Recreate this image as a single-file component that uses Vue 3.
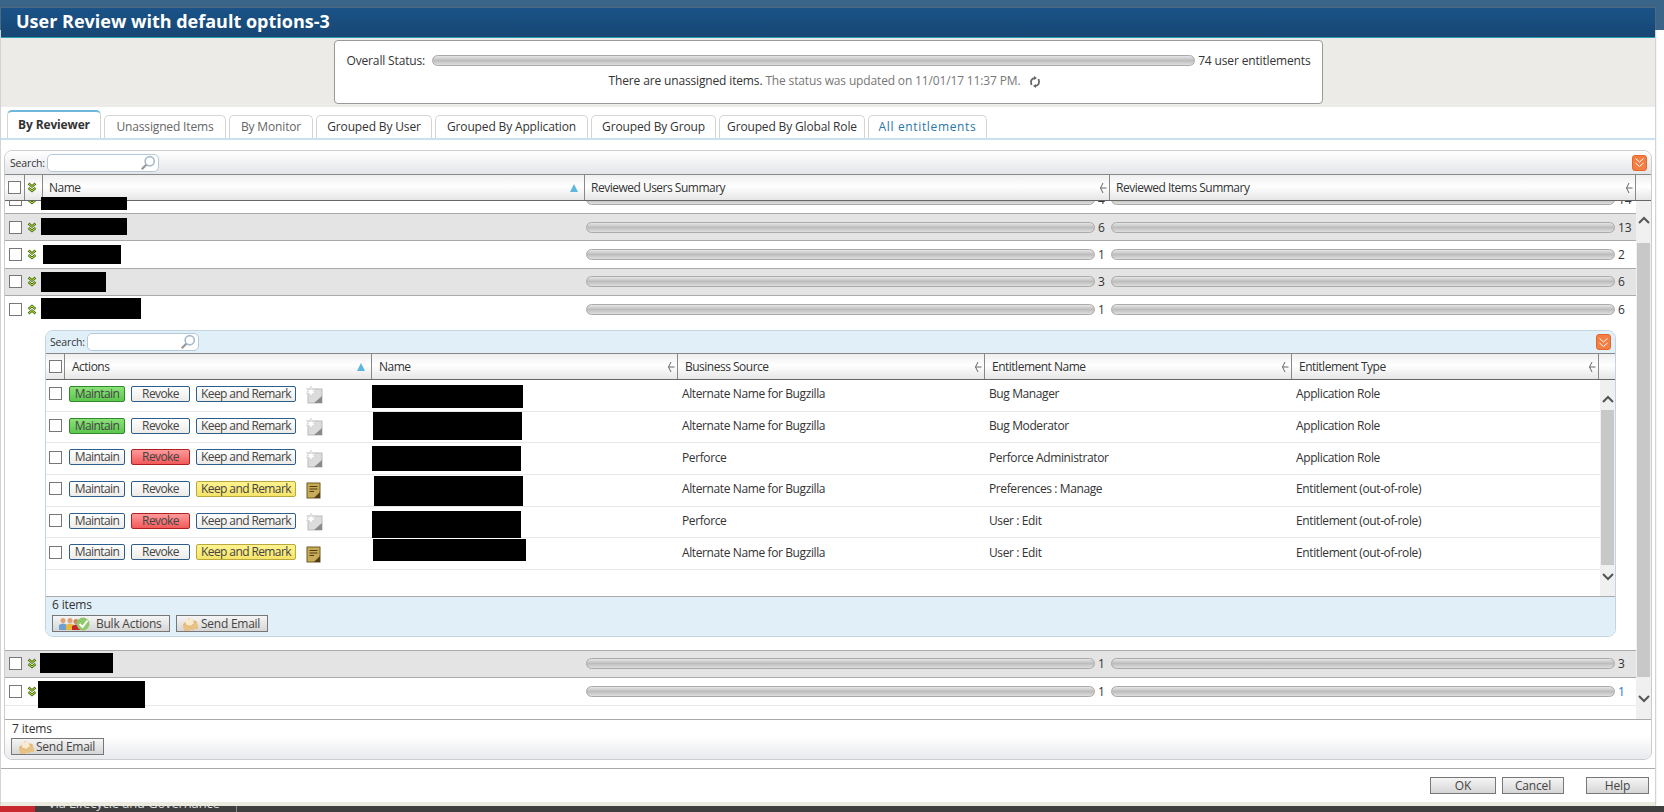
<template>
  <div class="page">
    <div class="dialog">
      <div class="title">User Review with default options-3</div>

      <div class="status-band">
        <div class="status-box">
          <div class="status-top">
            <span>Overall Status:</span>
            <div class="bar"></div>
            <span>74 user entitlements</span>
          </div>
          <div class="status-msg">
            There are unassigned items.
            <span class="muted">The status was updated on 11/01/17 11:37 PM.</span>
            <svg class="refresh" width="12" height="12" viewBox="0 0 12 12">
              <path d="M2.5 9 Q0.5 3 6 1.8 M9.5 3 Q11.5 9 6 10.2" fill="none" stroke="#666" stroke-width="1.8" />
              <path d="M5 0 L8 2 L5 4 Z M7 8 L4 10 L7 12 Z" fill="#666" />
            </svg>
          </div>
        </div>
      </div>

      <div class="tabs">
        <div
          v-for="t in tabs"
          :key="t.label"
          class="tab"
          :class="t.cls"
          :style="{ width: t.w + 'px' }"
        >{{ t.label }}</div>
      </div>

      <!-- outer grid -->
      <div class="panel">
        <div class="toolbar">
          <span class="search-label">Search:</span>
          <div class="search-box">
            <svg width="16" height="16" viewBox="0 0 14 14">
              <circle cx="8.5" cy="5.5" r="4" fill="#fff" stroke="#a9bccb" stroke-width="1.5" />
              <path d="M5.5 8.5 L1.5 12.5" stroke="#9a9a9a" stroke-width="2" />
            </svg>
          </div>
          <span class="orange-btn">
            <svg width="11" height="11" viewBox="0 0 11 11"><path d="M1.5 1.5 L5.5 5 L9.5 1.5 M1.5 6 L5.5 9.5 L9.5 6" fill="none" stroke="#fff" stroke-width="1" /></svg>
          </span>
        </div>

        <div class="head outer-cols">
          <div class="hcell center"><span class="check"></span></div>
          <div class="hcell center">
            <svg class="chev" width="10" height="11" viewBox="0 0 10 11"><path d="M1.5 1.5 L5 4.5 L8.5 1.5 M1.5 6 L5 9 L8.5 6" fill="none" stroke="#3e6b1f" stroke-width="2.4" /><path d="M1.5 1.5 L5 4.5 L8.5 1.5 M1.5 6 L5 9 L8.5 6" fill="none" stroke="#cfe52a" stroke-width="1" /></svg>
          </div>
          <div class="hcell"><span>Name</span>
            <svg class="sort" width="8" height="8" viewBox="0 0 8 8"><path d="M4 0 L8 8 H0 Z" fill="#5cb6dd" /></svg>
          </div>
          <div class="hcell"><span>Reviewed Users Summary</span>
            <svg class="menu" width="8" height="12" viewBox="0 0 8 12"><path d="M4 1 L1.5 6 L4 11 M1.5 6 H7.5" fill="none" stroke="#666" stroke-width="1" /></svg>
          </div>
          <div class="hcell"><span>Reviewed Items Summary</span>
            <svg class="menu" width="8" height="12" viewBox="0 0 8 12"><path d="M4 1 L1.5 6 L4 11 M1.5 6 H7.5" fill="none" stroke="#666" stroke-width="1" /></svg>
          </div>
          <div class="hcell last"></div>
        </div>

        <div class="body">
          <div class="rows">
            <template v-for="(r, i) in reviewers" :key="i">
              <div class="row outer-cols" :class="{ grey: r.grey, first: i === 0, soft: i === reviewers.length - 1, open: r.open, after: i > 4 }">
                <div class="center"><span class="check"></span></div>
                <div class="center">
                  <svg class="chev" width="10" height="11" viewBox="0 0 10 11" :class="{ flip: r.open }"><path d="M1.5 1.5 L5 4.5 L8.5 1.5 M1.5 6 L5 9 L8.5 6" fill="none" stroke="#3e6b1f" stroke-width="2.4" /><path d="M1.5 1.5 L5 4.5 L8.5 1.5 M1.5 6 L5 9 L8.5 6" fill="none" stroke="#cfe52a" stroke-width="1" /></svg>
                </div>
                <div></div>
                <div class="bar-cell users"><div class="bar"></div><span class="num">{{ r.users }}</span></div>
                <div class="bar-cell items"><div class="bar"></div><span class="num" :class="{ link: i === reviewers.length - 1 }">{{ r.items }}</span></div>
              </div>

              <!-- expanded detail -->
              <div v-if="r.open" class="detail">
                <div class="inner">
                  <div class="toolbar inner-bar">
                    <span class="search-label">Search:</span>
                    <div class="search-box">
                      <svg width="16" height="16" viewBox="0 0 14 14">
                        <circle cx="8.5" cy="5.5" r="4" fill="#fff" stroke="#a9bccb" stroke-width="1.5" />
                        <path d="M5.5 8.5 L1.5 12.5" stroke="#9a9a9a" stroke-width="2" />
                      </svg>
                    </div>
                    <span class="orange-btn">
                      <svg width="11" height="11" viewBox="0 0 11 11"><path d="M1.5 1.5 L5.5 5 L9.5 1.5 M1.5 6 L5.5 9.5 L9.5 6" fill="none" stroke="#fff" stroke-width="1" /></svg>
                    </span>
                  </div>
                  <div class="head inner-cols">
                    <div class="hcell center"><span class="check"></span></div>
                    <div class="hcell"><span>Actions</span>
                      <svg class="sort" width="8" height="8" viewBox="0 0 8 8"><path d="M4 0 L8 8 H0 Z" fill="#5cb6dd" /></svg>
                    </div>
                    <div v-for="h in innerHead" :key="h" class="hcell"><span>{{ h }}</span>
                      <svg class="menu" width="8" height="12" viewBox="0 0 8 12"><path d="M4 1 L1.5 6 L4 11 M1.5 6 H7.5" fill="none" stroke="#666" stroke-width="1" /></svg>
                    </div>
                    <div class="hcell last"></div>
                  </div>
                  <div class="inner-body">
                    <div class="inner-rows">
                      <div v-for="(e, j) in entitlements" :key="j" class="irow inner-cols">
                        <div class="center"><span class="check"></span></div>
                        <div class="actions">
                          <span class="act a1" :class="{ green: e.act === 'm' }">Maintain</span>
                          <span class="act a2" :class="{ red: e.act === 'r' }">Revoke</span>
                          <span class="act a3" :class="{ yellow: e.act === 'k' }">Keep and Remark</span>
                          <svg class="note" width="18" height="18" viewBox="0 0 18 18">
                            <template v-if="e.act === 'k'">
                              <rect x="2" y="2" width="13" height="15" fill="#c9ab57" stroke="#6e5a22" />
                              <path d="M4.5 5.5 H12.5 M4.5 8 H12.5 M4.5 10.5 H9" stroke="#4a3c14" stroke-width="1.2" />
                              <path d="M15 11 V17 H9 Z" fill="#4e3f17" />
                            </template>
                            <template v-else>
                              <rect x="3" y="3" width="14" height="14" fill="#dcdcdc" stroke="#bbb" />
                              <path d="M17 10 V17 H9 Z" fill="#8a8a8a" />
                              <path d="M6 0 L7 4 L10.5 2.5 L8.5 5.5 L11 7.5 L7.5 7.5 L6 11 L4.5 7.5 L1 7.5 L3.5 5.5 L1.5 2.5 L5 4 Z" fill="#fff" stroke="#ccc" stroke-width=".6" />
                            </template>
                          </svg>
                        </div>
                        <div></div>
                        <div class="tcell">{{ e.source }}</div>
                        <div class="tcell">{{ e.name }}</div>
                        <div class="tcell">{{ e.type }}</div>
                      </div>
                    </div>
                    <div class="scroll inner-scroll">
                      <svg width="14" height="10" viewBox="0 0 14 10"><path d="M2 8 L7 3 L12 8" fill="none" stroke="#555" stroke-width="2" /></svg>
                      <div class="thumb"></div>
                      <svg width="14" height="10" viewBox="0 0 14 10"><path d="M2 2 L7 7 L12 2" fill="none" stroke="#555" stroke-width="2" /></svg>
                    </div>
                  </div>
                  <div class="inner-foot">
                    <div class="count">6 items</div>
                    <div class="foot-btns">
                      <span class="btn bulk">
                        <svg width="32" height="14" viewBox="0 0 32 14">
                          <circle cx="5" cy="3.5" r="2.5" fill="#e0a070" /><path d="M1 13 V8 Q5 5 9 8 V13 Z" fill="#6f9fd0" />
                          <circle cx="12" cy="3.5" r="2.5" fill="#e0a070" /><path d="M8 13 V8 Q12 5 16 8 V13 Z" fill="#e8b83a" />
                          <circle cx="18" cy="4.5" r="2.5" fill="#c98a60" /><path d="M14 13 V9 Q18 6 22 9 V13 Z" fill="#c8262a" />
                          <circle cx="25" cy="7" r="6.5" fill="#8fc96a" /><path d="M21.5 7 L24.5 10 L29.5 3.5" fill="none" stroke="#fff" stroke-width="2" />
                        </svg>
                        Bulk Actions
                      </span>
                      <span class="btn mail">
                        <svg width="16" height="14" viewBox="0 0 16 14">
                          <g transform="rotate(-12 8 7)">
                            <path d="M1 6 L8 1 L15 6 V13 H1 Z" fill="#e3b56a" />
                            <path d="M4 2 H12 V7 L8 9 L4 7 Z" fill="#f7ead0" />
                            <path d="M1 6 L8 10 L15 6 V13 H1 Z" fill="#e8c285" />
                          </g>
                        </svg>
                        Send Email
                      </span>
                    </div>
                  </div>
                  <div
                    v-for="(b, k) in innerBoxes"
                    :key="k"
                    class="redact"
                    :style="boxStyle(b, 46, 331)"
                  ></div>
                </div>
              </div>
            </template>
          </div>
          <div class="scroll outer-scroll">
            <svg width="14" height="10" viewBox="0 0 14 10"><path d="M2 8 L7 3 L12 8" fill="none" stroke="#555" stroke-width="2" /></svg>
            <div class="thumb"></div>
            <svg width="14" height="10" viewBox="0 0 14 10"><path d="M2 2 L7 7 L12 2" fill="none" stroke="#555" stroke-width="2" /></svg>
          </div>
        </div>

        <div class="panel-foot">
          <div class="count">7 items</div>
          <span class="btn mail-outer">
            <svg width="16" height="14" viewBox="0 0 16 14">
              <g transform="rotate(-12 8 7)">
                <path d="M1 6 L8 1 L15 6 V13 H1 Z" fill="#e3b56a" />
                <path d="M4 2 H12 V7 L8 9 L4 7 Z" fill="#f7ead0" />
                <path d="M1 6 L8 10 L15 6 V13 H1 Z" fill="#e8c285" />
              </g>
            </svg>
            Send Email
          </span>
        </div>

        <div
          v-for="(b, k) in outerBoxes"
          :key="k"
          class="redact"
          :style="boxStyle(b, 5, 151)"
        ></div>
      </div>

      <div class="dialog-foot">
        <span class="fbtn ok">OK</span>
        <span class="fbtn cancel">Cancel</span>
        <span class="fbtn help">Help</span>
      </div>
      <div class="cream"></div>
    </div>

    <div class="taskbar">
      <span class="red-block"></span>
      <span class="task-text">Via Lifecycle and Governance</span>
      <span class="task-sep"></span>
    </div>
  </div>
</template>

<script setup>
const tabs = [
  { label: "By Reviewer", cls: "active", w: 94 },
  { label: "Unassigned Items", cls: "dim", w: 122 },
  { label: "By Monitor", cls: "dim", w: 84 },
  { label: "Grouped By User", w: 116 },
  { label: "Grouped By Application", w: 153 },
  { label: "Grouped By Group", w: 125 },
  { label: "Grouped By Global Role", w: 146 },
  { label: "All entitlements", cls: "blue", w: 119 },
];

const reviewers = [
  { users: 4, items: 14 },
  { users: 6, items: 13, grey: true },
  { users: 1, items: 2 },
  { users: 3, items: 6, grey: true },
  { users: 1, items: 6, open: true },
  { users: 1, items: 3, grey: true },
  { users: 1, items: 1 },
];

const innerHead = ["Name", "Business Source", "Entitlement Name", "Entitlement Type"];

const entitlements = [
  { act: "m", source: "Alternate Name for Bugzilla", name: "Bug Manager", type: "Application Role" },
  { act: "m", source: "Alternate Name for Bugzilla", name: "Bug Moderator", type: "Application Role" },
  { act: "r", source: "Perforce", name: "Perforce Administrator", type: "Application Role" },
  { act: "k", source: "Alternate Name for Bugzilla", name: "Preferences : Manage", type: "Entitlement (out-of-role)" },
  { act: "r", source: "Perforce", name: "User : Edit", type: "Entitlement (out-of-role)" },
  { act: "k", source: "Alternate Name for Bugzilla", name: "User : Edit", type: "Entitlement (out-of-role)" },
];

// blacked out names: x1, x2, y1, y2 in page pixels
const outerBoxes = [
  [41, 127, 197, 210],
  [41, 127, 218, 235],
  [43, 121, 245, 264],
  [41, 106, 272, 292],
  [41, 141, 298, 319],
  [40, 113, 653, 673],
  [38, 145, 681, 708],
];
const innerBoxes = [
  [372, 523, 385, 408],
  [373, 522, 412, 440],
  [372, 521, 446, 471],
  [374, 523, 476, 506],
  [372, 521, 511, 538],
  [373, 526, 539, 561],
];

function boxStyle(b, ox, oy) {
  return {
    left: b[0] - ox + "px",
    top: b[2] - oy + "px",
    width: b[1] - b[0] + "px",
    height: b[3] - b[2] + "px",
  };
}
</script>

<style>
html,
body {
  margin: 0;
  background: #fff;
}
</style>

<style scoped>
.page {
  width: 1664px;
  height: 812px;
  overflow: hidden;
  position: relative;
  font-family: "Open Sans", "Liberation Sans", sans-serif;
  font-size: 12px;
  letter-spacing: -0.15px;
  color: #333;
  background: linear-gradient(#3b6588 0, #3b6588 30px, #fff 30px);
  padding-top: 8px;
  box-sizing: border-box;
}
.dialog {
  width: 1654px;
  height: 798px;
  margin-left: 1px;
  background: #fff;
  box-shadow: 0 0 2px #777;
  display: flex;
  flex-direction: column;
  box-sizing: border-box;
}
.title {
  height: 30px;
  line-height: 27px;
  flex: none;
  padding-left: 15px;
  background: linear-gradient(#1a5388, #174673);
  border-bottom: 1px solid #27a0b0;
  color: #fff;
  font-size: 18px;
  font-weight: 700;
  letter-spacing: 0;
  box-sizing: border-box;
}
.status-band {
  height: 69px;
  flex: none;
  background: #ecebe7;
  display: flex;
  justify-content: center;
  padding-top: 2px;
  box-sizing: border-box;
}
.status-box {
  width: 989px;
  height: 64px;
  background: #fff;
  border: 1px solid #999;
  border-radius: 4px;
  box-sizing: border-box;
  padding: 11px 11px 0 12px;
}
.status-top {
  display: flex;
  align-items: center;
  gap: 3px;
  height: 17px;
}
.status-top .bar {
  flex: 1;
  margin: 0 0 0 4px;
}
.status-msg {
  text-align: center;
  margin-top: 3px;
  height: 18px;
  line-height: 18px;
  padding-right: 7px;
}
.muted {
  color: #777;
}
.refresh {
  vertical-align: -3px;
  margin-left: 9px;
}
.bar {
  height: 11px;
  border: 1px solid #aaa;
  border-radius: 6px;
  background: linear-gradient(#e6e6e6, #bdbdbd 50%, #dedede);
  box-sizing: border-box;
}

.tabs {
  height: 33px;
  flex: none;
  display: flex;
  align-items: flex-end;
  gap: 3px;
  padding-left: 6px;
  border-bottom: 2px solid #c8e0f0;
  box-sizing: border-box;
}
.tab {
  height: 23px;
  line-height: 22px;
  text-align: center;
  border: 1px solid #d5d5d5;
  border-bottom: none;
  border-radius: 5px 5px 0 0;
  box-sizing: border-box;
  background: #fff;
}
.tab.dim {
  color: #666;
}
.tab.blue {
  color: #2a76a8;
  letter-spacing: 0.65px;
}
.tab.active {
  height: 28px;
  line-height: 25px;
  font-weight: 700;
  border-top: 2px solid #6fb6dc;
}

.panel {
  position: relative;
  margin: 10px 3px 0 3px;
  height: 610px;
  flex: none;
  border: 1px solid #ccc;
  border-radius: 8px;
  box-sizing: border-box;
  display: flex;
  flex-direction: column;
  overflow: hidden;
}
.toolbar {
  height: 23px;
  flex: none;
  display: flex;
  align-items: center;
  padding: 0 4px 0 5px;
  background: linear-gradient(#fff, #e4e5e9);
  font-size: 10.5px;
}
.search-label {
  width: 37px;
}
.search-box {
  width: 112px;
  height: 18px;
  background: #fff;
  border: 1px solid #b5c8d8;
  border-radius: 5px;
  box-sizing: border-box;
  display: flex;
  align-items: center;
  justify-content: flex-end;
  padding-right: 2px;
}
.orange-btn {
  margin-left: auto;
  width: 15px;
  height: 16px;
  background: #f47f45;
  border: 1px solid #e8652a;
  border-radius: 3px;
  box-sizing: border-box;
  display: flex;
  align-items: center;
  justify-content: center;
}

.head {
  flex: none;
  height: 27px;
  border-top: 1px solid #888;
  border-bottom: 1px solid #666;
  box-sizing: border-box;
  background: linear-gradient(#efefef, #fff 45%, #e6e6e6);
  letter-spacing: -0.5px;
}
.hcell {
  display: flex;
  align-items: center;
  justify-content: space-between;
  padding: 0 6px 0 6px;
  border-right: 1px solid #888;
  min-width: 0;
}
.inner .hcell {
  padding-left: 7px;
}
.hcell.center,
.inner .hcell.center,
.center {
  display: flex;
  align-items: center;
  justify-content: center;
  padding: 0;
}
.hcell.last {
  border-right: none;
}
.menu {
  margin-right: -4px;
}
.outer-cols {
  display: grid;
  grid-template-columns: 20px 18px 542px 525px 526px 15px;
}
.inner-cols {
  display: grid;
  grid-template-columns: 19px 307px 306px 307px 307px 307px 16px;
}
.check {
  display: block;
  width: 13px;
  height: 13px;
  background: #fff;
  border: 1px solid #777;
  box-sizing: border-box;
}
.chev {
  margin-right: 4px;
}
.flip {
  transform: scaleY(-1);
}

.body {
  flex: 1;
  display: flex;
  min-height: 0;
  overflow: hidden;
  border-bottom: 1px solid #aaa;
}
.rows {
  width: 1631px;
  flex: none;
  overflow: hidden;
}
.row {
  height: 27.4px;
  border-bottom: 1px solid #aaa;
  box-sizing: border-box;
  grid-template-columns: 20px 18px 542px 525px 526px;
}
.row.first {
  margin-top: -14.5px;
}
.row.grey {
  background: #e4e4e4;
}
.row.open {
  height: 26px;
  border-bottom: none;
}
.row.after {
  padding-bottom: 1px;
}
.row.soft {
  border-bottom-color: #e8e8e8;
}
.bar-cell {
  display: flex;
  align-items: center;
  min-width: 0;
}
.bar-cell .bar {
  flex: none;
}
.bar-cell.users {
  padding-left: 1px;
}
.bar-cell.users .bar {
  width: 509px;
}
.bar-cell.users .num {
  margin-left: 3px;
}
.bar-cell.items {
  padding-left: 1px;
}
.bar-cell.items .bar {
  width: 504px;
}
.bar-cell.items .num {
  margin-left: 3px;
}
.link {
  color: #2a76c8;
}

.scroll {
  background: #f0f0f0;
  display: flex;
  flex-direction: column;
  align-items: center;
  box-sizing: border-box;
}
.thumb {
  background: #c8c8c8;
  width: 13px;
}
.outer-scroll {
  width: 15px;
  flex: none;
  padding-top: 14px;
}
.outer-scroll .thumb {
  height: 434px;
  margin: 18px 0 17px;
}
.inner-scroll {
  width: 15px;
  flex: none;
  padding-top: 14px;
}
.inner-scroll .thumb {
  height: 155px;
  margin: 6px 0 7px;
}

.detail {
  padding: 8px 20px 13px 40px;
  border-bottom: 1px solid #aaa;
}
.inner {
  position: relative;
  width: 1571px;
  height: 307px;
  border: 1px solid #c3d3df;
  border-radius: 8px;
  box-sizing: border-box;
  overflow: hidden;
  display: flex;
  flex-direction: column;
}
.inner-bar {
  height: 22px;
  background: #e1eff9;
  padding: 0 4px 0 4px;
}
.inner-bar .search-label {
  width: 37px;
}
.inner-body {
  height: 217px;
  flex: none;
  display: flex;
  border-bottom: 1px solid #aaa;
  box-sizing: border-box;
}
.inner-rows {
  width: 1554px;
  flex: none;
}
.irow {
  height: 31.667px;
  padding-bottom: 3px;
  border-bottom: 1px solid #e6e6e6;
  box-sizing: border-box;
  align-items: center;
  grid-template-columns: 19px 307px 306px 307px 307px 307px;
  letter-spacing: -0.39px;
}
.actions {
  display: flex;
  align-items: center;
  padding-left: 4px;
}
.act {
  height: 16px;
  line-height: 14px;
  border: 1px solid #2e5f8c;
  border-radius: 2px;
  box-sizing: border-box;
  text-align: center;
  font-size: 12px;
  letter-spacing: -0.6px;
  background: linear-gradient(#fff, #ecebe7);
  color: #444;
}
.a1 {
  width: 56px;
}
.a2 {
  width: 59px;
  margin-left: 6px;
}
.a3 {
  width: 100px;
  margin-left: 6px;
}
.act.green {
  background: linear-gradient(#8ce27a, #5cc64e);
  border-color: #2f8a2a;
}
.act.red {
  background: linear-gradient(#ff9a9a, #f25a5a);
  border-color: #b02020;
}
.act.yellow {
  background: linear-gradient(#fff38f, #f5e46a);
  border-color: #b9a83c;
}
.note {
  margin-left: 9px;
  margin-top: 3px;
}
.tcell {
  padding-left: 4px;
}
.inner-foot {
  flex: 1;
  background: #e1eff9;
  padding: 0 0 0 6px;
}
.count {
  height: 17px;
  line-height: 16px;
}
.foot-btns {
  display: flex;
  gap: 6px;
  margin-top: 1px;
}
.btn {
  height: 17px;
  display: inline-flex;
  align-items: center;
  gap: 6px;
  border: 1px solid #777;
  box-sizing: border-box;
  background: linear-gradient(#f5f5f5, #d6d6d6);
  color: #444;
  letter-spacing: -0.25px;
}
.bulk {
  width: 118px;
  padding-left: 5px;
}
.mail {
  width: 92px;
  padding-left: 5px;
  gap: 3px;
}
.panel-foot {
  flex: none;
  height: 39px;
  padding-left: 6px;
  background: linear-gradient(#fff 40%, #e9eaee);
}
.panel-foot .count {
  padding: 1px 0 0 1px;
}
.mail-outer {
  width: 93px;
  padding-left: 6px;
  gap: 2px;
}
.redact {
  position: absolute;
  background: #000;
  z-index: 2;
}

.dialog-foot {
  margin-top: 8px;
  flex: 1;
  border-top: 1px solid #aaa;
  display: flex;
  justify-content: flex-end;
  align-items: flex-start;
  padding: 8px 6px 0 0;
}
.fbtn {
  height: 17px;
  line-height: 15px;
  border: 1px solid #777;
  box-sizing: border-box;
  text-align: center;
  background: linear-gradient(#f5f5f5, #d6d6d6);
  color: #444;
}
.ok {
  width: 66px;
}
.cancel {
  width: 62px;
  margin-left: 6px;
}
.help {
  width: 63px;
  margin-left: 22px;
}
.cream {
  height: 4px;
  flex: none;
  background: #ecebe0;
}

.taskbar {
  position: absolute;
  left: 0;
  right: 0;
  top: 806px;
  height: 6px;
  background: #3f3f3f;
  overflow: hidden;
  color: #ddd;
  font-size: 13px;
}
.red-block {
  position: absolute;
  left: 0;
  top: 0;
  width: 35px;
  height: 6px;
  background: #c8282e;
}
.task-text {
  position: absolute;
  left: 48px;
  top: -12px;
}
.task-sep {
  position: absolute;
  left: 236px;
  top: 0;
  width: 1px;
  height: 6px;
  background: #888;
}
</style>
